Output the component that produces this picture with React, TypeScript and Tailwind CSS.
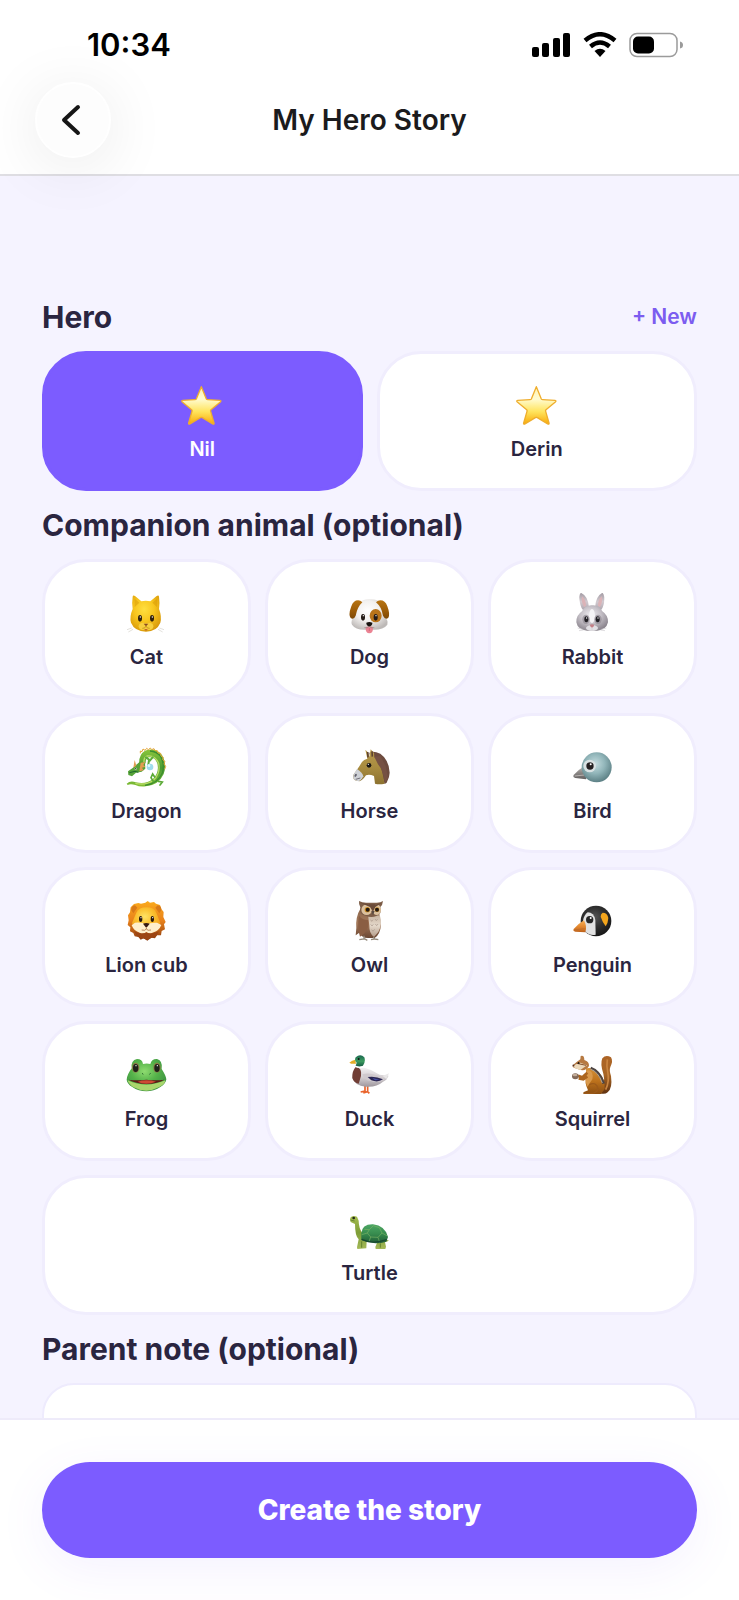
import { useState } from "react";
import type { ReactNode } from "react";

function Linear({ id, stops }: { id: string; stops: string[] }) {
  return (
    <linearGradient id={id} x1="0" y1="0" x2="0" y2="1">
      {stops.map((color, i) => (
        <stop key={i} offset={i / (stops.length - 1)} stopColor={color} />
      ))}
    </linearGradient>
  );
}

function Radial({ id, stops }: { id: string; stops: string[] }) {
  return (
    <radialGradient id={id} cx="0.45" cy="0.38" r="0.65">
      {stops.map((color, i) => (
        <stop key={i} offset={i / (stops.length - 1)} stopColor={color} />
      ))}
    </radialGradient>
  );
}

function Drawing({ children }: { children: ReactNode }) {
  return (
    <svg viewBox="0 0 126 126" className="size-[42px]" aria-hidden="true">
      {children}
    </svg>
  );
}

function Star() {
  return (
    <Drawing>
      <defs>
        <Linear id="star" stops={["#fff3b0", "#fffbd0", "#ffe45c", "#f9a908"]} />
      </defs>
      <path
        d="M61 8 L76 45 Q77 47 80 47 L117 49 Q122 50 118 54 L90 77 Q88 79 89 82 L99 117 Q100 122 95 120 L64 101 Q61 99 58 101 L27 120 Q22 122 23 117 L33 82 Q34 79 32 77 L4 54 Q0 50 5 49 L42 47 Q45 47 46 45 Z"
        fill="url(#star)"
        stroke="#efae2e"
        strokeWidth="4"
        strokeLinejoin="round"
      />
    </Drawing>
  );
}

function Cat() {
  return (
    <Drawing>
      <defs>
        <Radial id="cat" stops={["#ffdf3f", "#f8c61e", "#d8990a"]} />
      </defs>
      <path d="M17 108 L3 113 M21 112 L7 120 M100 108 L114 113 M96 112 L110 120" stroke="#d5d2ca" strokeWidth="2" />
      <path
        d="M20 14 Q21 8 28 13 L46 28 Q59 24 73 28 L91 13 Q98 8 99 14 Q102 34 99 51 Q108 74 103 92 Q93 118 60 119 Q26 118 15 92 Q10 74 20 51 Q17 34 20 14"
        fill="url(#cat)"
      />
      <path d="M26 20 L40 32 L26 45 Z M93 20 L79 32 L93 45 Z" fill="#d79a06" opacity="0.5" />
      <ellipse cx="51" cy="103" rx="13" ry="11" fill="#f7cf3e" />
      <ellipse cx="69" cy="103" rx="13" ry="11" fill="#f7cf3e" />
      <ellipse cx="42" cy="79" rx="6" ry="10" fill="#30200b" />
      <ellipse cx="78" cy="79" rx="6" ry="10" fill="#30200b" />
      <circle cx="43" cy="75" r="2" fill="#fff" />
      <circle cx="79" cy="75" r="2" fill="#fff" />
      <path d="M53 95 H67 L60 103 Z" fill="#8a4b21" />
      <path d="M60 102 Q58 110 49 109 M60 102 Q62 110 71 109" fill="none" stroke="#b5800f" strokeWidth="2" />
      <path d="M55 111 Q60 121 65 111" fill="#c3672c" />
    </Drawing>
  );
}

function Dog() {
  return (
    <Drawing>
      <defs>
        <Radial id="dog" stops={["#ffffff", "#f3f1ef", "#bdb9b7"]} />
        <Linear id="dogear" stops={["#b77412", "#a05f09", "#7d4805"]} />
      </defs>
      <path
        d="M61 22 Q85 20 96 34 Q107 55 106 75 Q119 84 115 98 Q104 113 75 113 H46 Q19 113 9 98 Q4 84 16 74 Q18 53 29 34 Q42 21 61 22"
        fill="url(#dog)"
      />
      <path d="M34 26 Q15 21 7 43 Q-3 69 5 78 Q14 85 20 71 Q25 45 40 31 Z" fill="url(#dogear)" />
      <path d="M87 26 Q107 21 115 43 Q124 67 118 77 Q109 85 102 71 Q98 45 81 31 Z" fill="url(#dogear)" />
      <ellipse cx="80" cy="71" rx="18" ry="20" fill="#b9741a" />
      <ellipse cx="42" cy="76" rx="6" ry="10" fill="#251b16" />
      <ellipse cx="80" cy="76" rx="6" ry="10" fill="#251b16" />
      <circle cx="43" cy="71" r="2" fill="#fff" />
      <circle cx="81" cy="71" r="2" fill="#fff" />
      <path d="M50 106 Q61 100 72 106 Q73 124 61 124 Q49 124 50 106" fill="#eb8393" />
      <path d="M61 108 V117" stroke="#c95a70" strokeWidth="2" />
      <path d="M52 92 Q61 88 70 92 Q71 100 61 104 Q51 100 52 92" fill="#17130f" />
      <path d="M61 102 Q59 110 46 107 M61 102 Q63 110 76 107" fill="none" stroke="#8d837d" strokeWidth="2" />
    </Drawing>
  );
}

function Rabbit() {
  return (
    <Drawing>
      <defs>
        <Radial id="rabbit" stops={["#efedf1", "#c6c1c8", "#89838c"]} />
        <Linear id="rabbitear" stops={["#a49ca4", "#d3cbd1", "#aaa2aa"]} />
      </defs>
      <path d="M26 3 Q19 10 24 33 Q27 49 35 56 L51 47 Q49 13 28 3 Z" fill="url(#rabbitear)" />
      <path d="M92 3 Q99 10 96 33 Q93 49 85 56 L69 47 Q71 13 90 3 Z" fill="url(#rabbitear)" />
      <path d="M30 13 Q27 29 36 45 L42 42 Q42 22 30 13 M89 13 Q93 29 84 45 L78 42 Q78 22 89 13" fill="#dbb3b7" />
      <path
        d="M60 40 Q82 38 91 58 Q109 70 108 91 Q103 113 76 116 H45 Q17 113 13 91 Q12 70 30 58 Q39 39 60 40"
        fill="url(#rabbit)"
      />
      <ellipse cx="60" cy="72" rx="9" ry="21" fill="#f5f4f6" />
      <ellipse cx="42" cy="82" rx="11" ry="14" fill="#8d8790" opacity="0.65" />
      <ellipse cx="78" cy="82" rx="11" ry="14" fill="#8d8790" opacity="0.65" />
      <ellipse cx="43" cy="82" rx="6" ry="9" fill="#201e23" />
      <ellipse cx="77" cy="82" rx="6" ry="9" fill="#201e23" />
      <circle cx="44" cy="78" r="2" fill="#fff" />
      <circle cx="78" cy="78" r="2" fill="#fff" />
      <ellipse cx="60" cy="108" rx="18" ry="9" fill="#e2e0e4" />
      <path d="M53 98 Q60 95 67 98 Q65 105 60 107 Q55 105 53 98" fill="#c38087" />
      <path d="M60 108 V116 M17 108 L32 112 M21 116 L35 114 M103 108 L88 112 M99 116 L85 114" stroke="#cfcbd0" strokeWidth="2" />
    </Drawing>
  );
}

function Dragon() {
  return (
    <Drawing>
      <defs>
        <Linear id="dragon" stops={["#8ac53b", "#4a9b33", "#83bf35"]} />
      </defs>
      <path
        d="M2 113 Q13 103 29 109 Q60 116 80 100 Q101 79 94 52 Q86 31 68 34 Q58 37 59 52 L40 56 Q37 26 57 14 Q88 3 108 27 Q124 54 113 84 Q98 118 59 121 Q41 123 28 117 Q13 112 5 117 Z"
        fill="url(#dragon)"
      />
      <path d="M28 112 Q61 119 83 102 Q104 81 98 52 Q87 27 64 30 Q53 34 54 48" fill="none" stroke="#b9dc68" strokeWidth="4" />
      <path d="M57 118 Q95 114 109 81 Q117 55 104 31 Q92 16 72 15" fill="none" stroke="#3b8d30" strokeWidth="4" />
      <path d="M43 22 L43 15 L48 17 L51 9 L57 13 L62 7 L67 11 L73 6 L77 11 L84 8 L87 14 L94 14 L96 21 L104 22 L105 30 L112 34 L110 41 L117 46 L114 54 L119 61 L116 70" fill="none" stroke="#e5a63a" strokeWidth="3" />
      <path d="M60 34 L72 43 L80 34 M69 42 L67 56" fill="none" stroke="#5eac3b" strokeWidth="6" strokeLinecap="round" />
      <circle cx="72" cy="63" r="10" fill="#9fdced" />
      <circle cx="69" cy="59" r="4" fill="#dffaff" />
      <path d="M29 58 L43 46 L57 50 L58 68 L47 77 L30 80 L18 91 L7 87 L6 76 L20 66 Z" fill="#56a338" />
      <path d="M26 42 L31 59 L22 65 Z M44 50 L58 48 L52 57 L58 62 L48 65 L53 73 L40 76 Z" fill="#e29c52" />
      <path d="M10 80 L27 76 L37 79" fill="none" stroke="#1e672c" strokeWidth="3" />
      <circle cx="29" cy="68" r="3" fill="#fff" />
      <circle cx="29" cy="68" r="2" fill="#222" />
      <path d="M83 107 L75 95 L80 84 L86 93 M97 106 L109 108 L102 117" fill="none" stroke="#5aa935" strokeWidth="5" strokeLinecap="round" />
    </Drawing>
  );
}

function Horse() {
  return (
    <Drawing>
      <defs>
        <Linear id="horse" stops={["#b89a4c", "#a98c40", "#8d7230"]} />
      </defs>
      <path
        d="M61 20 L72 17 L82 19 L94 23 L105 33 L113 45 L119 60 L122 80 L120 93 L113 110 L107 114 L92 69 L64 34 Z"
        fill="#6d4b3e"
      />
      <path
        d="M55 38 L49 11 L58 20 L61 33 L65 10 L75 21 L76 34 Q91 42 96 60 L107 113 Q90 116 78 113 L75 90 Q61 84 51 88 Q41 103 31 106 L18 103 Q11 97 13 87 L30 62 L39 48 Q44 40 55 38"
        fill="url(#horse)"
      />
      <path d="M56 18 L57 34 M69 16 L70 32" stroke="#5e422f" strokeWidth="5" />
      <path d="M76 32 L87 55 L95 66 L103 87 L108 112 L117 96 L110 60 L94 30 Z" fill="#765143" />
      <path d="M24 69 Q40 79 43 91 Q36 104 28 106 L17 102 Q11 96 13 87 Z" fill="#ced1d6" />
      <ellipse cx="20" cy="88" rx="3" ry="5" fill="#62616b" transform="rotate(30 20 88)" />
      <path d="M20 100 L34 96" stroke="#73717a" strokeWidth="3" />
      <circle cx="60" cy="58" r="7" fill="#191512" />
      <circle cx="58" cy="55" r="2" fill="#fff" />
    </Drawing>
  );
}

function Bird() {
  return (
    <Drawing>
      <defs>
        <Radial id="bird" stops={["#c4dcdf", "#91b5b9", "#577b80"]} />
        <Linear id="beak" stops={["#c0bdba", "#8b8785", "#625f5f"]} />
      </defs>
      <path d="M38 60 Q20 70 5 87 Q2 94 10 96 L42 100 Q50 85 38 60" fill="url(#beak)" />
      <path d="M8 90 L37 87" stroke="#b5b0ae" strokeWidth="3" />
      <circle cx="74" cy="64" r="45" fill="url(#bird)" />
      <circle cx="53" cy="60" r="19" fill="#d9e2e3" />
      <circle cx="54" cy="60" r="11" fill="#241f20" />
      <circle cx="56" cy="55" r="3" fill="#fff" />
    </Drawing>
  );
}

function Lion() {
  return (
    <Drawing>
      <defs>
        <Linear id="mane" stops={["#fbab1c", "#e8811b", "#8a3a10"]} />
        <Radial id="lion" stops={["#ffe365", "#fbc02e", "#f09a1c"]} />
      </defs>
      <path
        d="M58 8 L65 3 L72 8 L84 6 L90 11 L102 15 L106 27 L113 36 L112 51 L119 66 L114 73 L117 88 L107 93 L105 106 L93 106 L87 115 L76 113 L64 122 L53 115 L44 119 L37 111 L26 109 L22 99 L12 94 L13 82 L5 75 L8 61 L6 46 L12 37 L14 22 L24 12 L37 9 L45 11 Z"
        fill="url(#mane)"
      />
      <path d="M16 31 Q15 18 27 16 L34 23 L22 40 Z M106 31 Q107 18 95 16 L88 23 L100 40 Z" fill="#d87a18" />
      <path d="M61 22 Q84 22 91 38 L103 69 Q98 92 78 95 H45 Q24 93 18 69 L31 38 Q39 22 61 22" fill="url(#lion)" />
      <path d="M61 74 Q49 66 27 68 L17 76 Q24 94 41 98 Q51 104 61 96 Q71 104 83 97 Q99 92 106 75 L93 68 Q71 67 61 74" fill="#ffefcc" />
      <ellipse cx="44" cy="57" rx="5" ry="9" fill="#28160c" />
      <ellipse cx="79" cy="57" rx="5" ry="9" fill="#28160c" />
      <circle cx="45" cy="53" r="2" fill="#fff" />
      <circle cx="80" cy="53" r="2" fill="#fff" />
      <path d="M51 71 Q61 67 71 71 L64 80 Q61 83 58 80 Z" fill="#361912" />
      <path d="M61 82 V87 Q58 93 47 90 M61 87 Q65 93 75 90" fill="none" stroke="#9a5526" strokeWidth="2" />
      <path d="M24 94 Q43 104 61 98 Q80 104 99 94 L91 108 L62 119 L33 108 Z" fill="#9c4513" />
    </Drawing>
  );
}

function Owl() {
  return (
    <Drawing>
      <defs>
        <Linear id="owl" stops={["#8c674c", "#a4795a", "#6a4632"]} />
        <Linear id="owlbelly" stops={["#c6b29f", "#e5d9cb", "#b49c89"]} />
      </defs>
      <path d="M35 25 Q19 51 22 84 L20 106 L31 98 Q37 113 57 114 H77 Q94 103 96 75 L90 36 Z" fill="url(#owl)" />
      <path d="M57 44 Q79 41 93 48 Q101 72 88 96 L75 111 Q60 101 61 76 Z" fill="url(#owlbelly)" />
      <path d="M65 59 L68 64 L72 59 M78 57 L82 62 L86 57 M65 73 L69 78 L73 73 M79 72 L83 77 L87 72 M68 89 L72 94 L77 88" fill="none" stroke="#a8968a" strokeWidth="2" />
      <path d="M30 47 Q40 60 57 60 Q63 83 45 101 L33 110 Q24 83 30 47" fill="#8a5e43" />
      <path d="M30 3 Q41 9 55 8 H80 Q94 9 102 3 Q101 15 94 21 Q100 43 82 48 Q66 54 50 47 Q29 45 34 22 Q29 14 30 3" fill="#7d5d47" />
      <ellipse cx="53" cy="29" rx="16" ry="16" fill="#dcc19d" />
      <ellipse cx="83" cy="29" rx="13" ry="16" fill="#dcc19d" />
      <path d="M34 8 L63 21 L72 35 L79 21 L98 9 L81 13 H59 Z" fill="#6a4a38" />
      <circle cx="55" cy="29" r="8" fill="#c98a1e" />
      <circle cx="84" cy="29" r="7" fill="#c98a1e" />
      <circle cx="56" cy="29" r="6" fill="#231912" />
      <circle cx="84" cy="29" r="6" fill="#231912" />
      <path d="M67 33 H77 L72 46 Z" fill="#5b4c43" />
      <path d="M45 107 L45 117 L31 119 M46 116 L55 121 M73 111 L77 117 L66 119 M77 117 L88 119" fill="none" stroke="#958b7d" strokeWidth="4" />
    </Drawing>
  );
}

function Penguin() {
  return (
    <Drawing>
      <defs>
        <Radial id="penguin" stops={["#555555", "#303030", "#151515"]} />
        <Linear id="penguinbeak" stops={["#f9b157", "#e58a30", "#bd6019"]} />
      </defs>
      <circle cx="72" cy="63" r="46" fill="url(#penguin)" />
      <path d="M47 37 Q66 38 70 60 L71 104 Q52 108 38 93 L33 62 Q36 45 47 37" fill="#e2e2e2" />
      <path d="M36 61 Q19 71 5 87 Q2 94 10 95 L40 97 Q46 79 36 61" fill="url(#penguinbeak)" />
      <path d="M6 90 L38 86" stroke="#b9692a" strokeWidth="2" />
      <circle cx="53" cy="59" r="11" fill="#262626" />
      <circle cx="56" cy="54" r="3" fill="#fff" />
      <path d="M92 38 Q106 38 109 54 Q108 70 101 79 Q92 68 86 50 Q86 41 92 38" fill="#f3a51d" />
    </Drawing>
  );
}

function Frog() {
  return (
    <Drawing>
      <defs>
        <Radial id="frog" stops={["#8edb70", "#55b34a", "#3a9040"]} />
      </defs>
      <path
        d="M17 43 Q14 19 33 15 Q49 15 51 30 Q62 27 73 30 Q77 14 93 15 Q111 20 107 45 Q120 65 121 76 Q120 89 103 99 Q83 112 61 112 Q38 112 19 99 Q3 89 2 77 Q3 62 17 43"
        fill="url(#frog)"
      />
      <path d="M5 79 Q33 92 61 92 Q91 91 118 79 Q117 91 100 99 Q81 109 61 110 Q39 109 21 99 Q7 89 5 79" fill="#a9d66c" />
      <path d="M8 77 Q33 80 61 77 Q91 80 115 77 Q95 89 62 90 Q29 89 8 77" fill="#5e1a15" />
      <path d="M35 83 Q61 75 90 83 Q76 89 61 89 Q45 89 35 83" fill="#ce4b34" />
      <ellipse cx="29" cy="41" rx="11" ry="15" fill="#8b7d45" />
      <ellipse cx="93" cy="41" rx="11" ry="15" fill="#8b7d45" />
      <ellipse cx="29" cy="42" rx="8" ry="12" fill="#1e221a" />
      <ellipse cx="93" cy="42" rx="8" ry="12" fill="#1e221a" />
      <circle cx="30" cy="35" r="2" fill="#fff" />
      <circle cx="94" cy="35" r="2" fill="#fff" />
      <path d="M48 58 L52 61 M74 58 L70 61" stroke="#2b6530" strokeWidth="3" />
    </Drawing>
  );
}

function Duck() {
  return (
    <Drawing>
      <defs>
        <Linear id="duck" stops={["#f2f0f2", "#d5d0d3", "#9e979d"]} />
        <Linear id="duckhead" stops={["#1a6750", "#3c9c5f", "#105240"]} />
      </defs>
      <path d="M48 91 V111 L35 114 M56 91 V113 L43 117 M56 113 L61 118" fill="none" stroke="#e9642c" strokeWidth="5" />
      <path d="M23 41 Q44 39 66 48 L92 62 L119 65 L112 77 L101 84 Q82 101 50 98 Q17 95 10 72 Q9 54 23 41" fill="url(#duck)" />
      <path d="M20 39 Q40 41 36 66 L29 89 Q14 86 10 72 Q9 51 20 39" fill="#713e35" />
      <path d="M40 61 Q63 54 91 66 L107 77 Q87 89 65 81 Q44 78 40 61" fill="#d0cace" />
      <path d="M56 69 Q79 65 102 76 Q87 87 67 79 Z" fill="#2b2754" />
      <path d="M70 72 L92 77 L78 79 Z" fill="#4650a5" />
      <path d="M19 17 Q9 19 1 26 Q8 31 21 29 Z" fill="#e4ad27" />
      <path d="M20 10 Q34 -2 46 10 Q51 23 41 37 Q31 42 20 36 L23 26 Q15 20 20 10" fill="url(#duckhead)" />
      <path d="M20 37 Q31 42 43 37" fill="none" stroke="#fff" strokeWidth="4" />
      <circle cx="29" cy="15" r="3" fill="#111" />
      <path d="M101 66 L120 58 L112 75" fill="#e9e7e8" />
    </Drawing>
  );
}

function Squirrel() {
  return (
    <Drawing>
      <defs>
        <Linear id="squirrel" stops={["#d49138", "#bd721c", "#8b4e12"]} />
        <Linear id="squirreltail" stops={["#ad6426", "#a86524", "#603210"]} />
      </defs>
      <path d="M91 13 Q102 0 117 10 Q124 21 115 39 Q111 49 117 66 Q122 103 107 115 Q98 123 83 117 Q102 89 94 59 Q84 29 91 13" fill="url(#squirreltail)" />
      <path d="M106 16 Q103 38 107 53 Q113 83 101 107" fill="none" stroke="#ca8540" strokeWidth="5" />
      <path d="M42 43 Q67 38 83 58 Q100 75 98 105 L87 120 H37 L34 115 L48 109 Q36 83 43 68 Z" fill="url(#squirrel)" />
      <path d="M56 42 Q83 51 95 89" fill="none" stroke="#4d4442" strokeWidth="8" />
      <path d="M55 45 Q79 53 91 87" fill="none" stroke="#dfd3be" strokeWidth="2" />
      <path d="M47 48 Q66 51 61 76 L46 98 Q37 78 43 55" fill="#d9994b" />
      <path d="M52 92 Q73 82 78 104 Q76 116 61 118 H34" fill="none" stroke="#9c5a1a" strokeWidth="4" />
      <path d="M13 25 L25 16 L26 6 Q37 2 37 18 Q52 23 51 36 Q43 51 26 48 L10 43 Q0 40 2 34 Z" fill="#b77a42" />
      <path d="M4 36 L21 25 L45 34 L25 48 L9 43 Z" fill="#ecd9bb" />
      <path d="M14 28 L42 34" stroke="#86502a" strokeWidth="3" />
      <circle cx="20" cy="27" r="3" fill="#1b120e" />
      <path d="M2 32 H7 V37 H2 Z" fill="#533128" />
      <path d="M46 56 L31 70 L18 65 M46 67 L34 76 L20 73" fill="none" stroke="#ac651e" strokeWidth="8" />
      <ellipse cx="10" cy="67" rx="10" ry="9" fill="#816858" />
      <ellipse cx="9" cy="63" rx="7" ry="4" fill="#c1ac99" />
    </Drawing>
  );
}

function Turtle() {
  return (
    <Drawing>
      <defs>
        <Linear id="turtle" stops={["#4da765", "#378c4e", "#205c35"]} />
        <Linear id="turtleskin" stops={["#a6bd4f", "#7e9d37", "#a4b957"]} />
      </defs>
      <path d="M4 29 Q10 21 24 26 L29 38 Q29 61 41 76 L99 89 L120 98 L108 103 L111 116 L109 123 H80 L79 117 L85 102 L53 99 L52 121 L25 123 L24 118 L29 94 Q18 84 18 48 L5 42 Q2 37 4 29" fill="url(#turtleskin)" />
      <path d="M37 76 Q39 48 72 49 Q108 53 117 87 L112 101 Q72 113 37 96 Z" fill="url(#turtle)" />
      <path d="M46 64 L61 65 L73 53 L91 59 L99 75 L87 88 L65 87 L55 75 L61 65 M55 75 L38 80 M65 87 L60 101 M87 88 L92 103 M99 75 L115 84" fill="none" stroke="#79b263" strokeWidth="2" />
      <path d="M38 94 Q72 110 113 95" fill="none" stroke="#194a31" strokeWidth="4" />
      <path d="M38 100 V119 M94 106 V119" stroke="#63832d" strokeWidth="3" />
      <circle cx="14" cy="30" r="4" fill="#20281a" />
      <path d="M4 36 L17 39" stroke="#536e2a" strokeWidth="2" />
    </Drawing>
  );
}

const heroes = ["Nil", "Derin"];

const animals = [
  { name: "Cat", icon: <Cat /> },
  { name: "Dog", icon: <Dog /> },
  { name: "Rabbit", icon: <Rabbit /> },
  { name: "Dragon", icon: <Dragon /> },
  { name: "Horse", icon: <Horse /> },
  { name: "Bird", icon: <Bird /> },
  { name: "Lion cub", icon: <Lion /> },
  { name: "Owl", icon: <Owl /> },
  { name: "Penguin", icon: <Penguin /> },
  { name: "Frog", icon: <Frog /> },
  { name: "Duck", icon: <Duck /> },
  { name: "Squirrel", icon: <Squirrel /> },
  { name: "Turtle", icon: <Turtle /> },
];

interface ChoiceCardProps {
  label: string;
  icon: ReactNode;
  selected: boolean;
  onSelect: () => void;
}

function ChoiceCard({ label, icon, selected, onSelect }: ChoiceCardProps) {
  return (
    <button
      type="button"
      aria-pressed={selected}
      onClick={onSelect}
      className={`flex h-[140px] flex-col items-center justify-center gap-[13px] rounded-[44px] border-3 text-[20px] leading-5 font-semibold last:nth-[3n+1]:col-span-full ${
        selected
          ? "border-[#7c5cff] bg-[#7c5cff] text-white"
          : "border-[#f0edfd] bg-white text-[#2a2540]"
      }`}
    >
      {icon}
      {label}
    </button>
  );
}

function StatusBar() {
  return (
    <div className="flex h-[90px] items-center justify-between pr-[55px] pl-[87px]">
      <span className="text-[31px] leading-9 font-semibold text-black">10:34</span>
      <div className="flex items-center gap-3">
        <svg width="39" height="26" viewBox="0 0 39 26" aria-hidden="true">
          <rect x="0" y="15" width="7" height="10" rx="2" />
          <rect x="10" y="11" width="7" height="14" rx="2" />
          <rect x="21" y="6" width="7" height="19" rx="2" />
          <rect x="31" y="1" width="7" height="24" rx="2" />
        </svg>
        <svg width="34" height="26" viewBox="0 0 34 26" aria-hidden="true">
          <path d="M2 8.5 Q17 -4 32 8.5" fill="none" stroke="#000" strokeWidth="4.5" />
          <path d="M7.5 14.5 Q17 6.5 26.5 14.5" fill="none" stroke="#000" strokeWidth="4.5" />
          <path d="M11.5 19 Q17 14.5 22.5 19 L17 25 Z" />
        </svg>
        <svg width="55" height="26" viewBox="0 0 55 26" aria-hidden="true">
          <rect x="1" y="1.5" width="47" height="23" rx="7" fill="none" stroke="#9b9b9b" strokeWidth="1.5" />
          <rect x="4" y="4.5" width="21" height="17" rx="5" />
          <path d="M51 9.5 Q54 10 54 13 Q54 16 51 16.5 Z" fill="#9b9b9b" />
        </svg>
      </div>
    </div>
  );
}

export default function App() {
  const [hero, setHero] = useState("Nil");
  const [animal, setAnimal] = useState("");
  const [note, setNote] = useState("");

  return (
    <div className="flex h-screen flex-col bg-[#f5f3ff] font-[Inter,sans-serif] text-[#2a2540]">
      <header className="relative z-10 border-b-2 border-[#dfdee3] bg-white">
        <StatusBar />
        <div className="grid h-[84px] grid-cols-[76px_1fr_76px] items-start px-[35px]">
          <button
            type="button"
            aria-label="Back"
            className="-mt-2 flex size-[76px] items-center justify-center rounded-full border-2 border-white bg-[#fdfdfd] pr-1 shadow-[0_8px_64px_rgba(0,0,0,0.09)]"
          >
            <svg width="20" height="32" viewBox="0 0 20 32" aria-hidden="true">
              <path d="M17 3 L3 16 L17 29" fill="none" stroke="#161616" strokeWidth="4" strokeLinecap="round" strokeLinejoin="round" />
            </svg>
          </button>
          <h1 className="pt-[10px] text-center text-[28px] leading-10 font-semibold text-[#1b1b1d]">
            My Hero Story
          </h1>
        </div>
      </header>

      <main className="flex min-h-0 flex-1 flex-col gap-[14px] overflow-y-auto px-[42px] pt-[121px] [scrollbar-width:none]">
        <div className="flex shrink-0 items-center justify-between">
          <h2 className="text-[30px] leading-10 font-bold">Hero</h2>
          <button type="button" className="text-[21px] leading-10 font-semibold text-[#7c5cf0]">
            + New
          </button>
        </div>
        <div className="grid shrink-0 grid-cols-2 gap-[14px]">
          {heroes.map((name) => (
            <ChoiceCard
              key={name}
              label={name}
              icon={<Star />}
              selected={hero === name}
              onSelect={() => setHero(name)}
            />
          ))}
        </div>

        <h2 className="shrink-0 text-[30px] leading-10 font-bold">Companion animal (optional)</h2>
        <div className="grid shrink-0 grid-cols-3 gap-[14px]">
          {animals.map(({ name, icon }) => (
            <ChoiceCard
              key={name}
              label={name}
              icon={icon}
              selected={animal === name}
              onSelect={() => setAnimal(animal === name ? "" : name)}
            />
          ))}
        </div>

        <label htmlFor="parent-note" className="shrink-0 text-[30px] leading-10 font-bold">
          Parent note (optional)
        </label>
        <textarea
          id="parent-note"
          value={note}
          onChange={(e) => setNote(e.target.value)}
          className="mb-8 h-[180px] shrink-0 resize-none rounded-[32px] border-2 border-[#eeebfd] bg-white p-6 text-[28px]"
        />
      </main>

      <footer className="border-t-2 border-[#eeebfa] bg-white px-[42px] py-[42px]">
        <button
          type="button"
          className="h-24 w-full rounded-full bg-[#7c5cff] text-[28px] leading-10 font-extrabold text-white shadow-[0_12px_48px_rgba(124,92,255,0.08)]"
        >
          Create the story
        </button>
      </footer>
    </div>
  );
}
